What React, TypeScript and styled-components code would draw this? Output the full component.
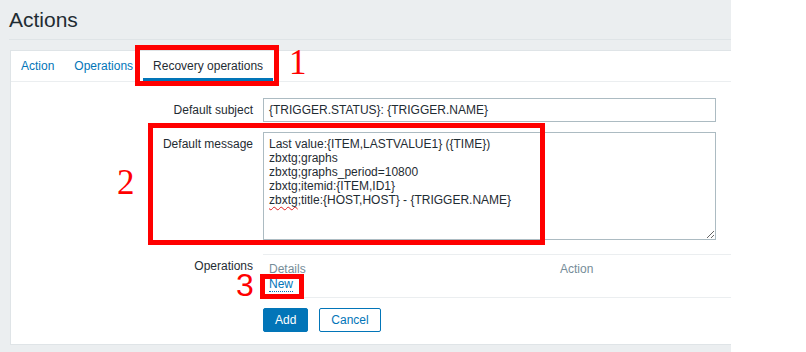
import styled, { createGlobalStyle } from "styled-components";

const GlobalStyle = createGlobalStyle`
    html, body {
        margin: 0;
        padding: 0;
        background: #ffffff;
    }
    body {
        font-family: "Liberation Sans", Arial, sans-serif;
        font-size: 12px;
        color: #1f2c33;
    }
`;

const Page = styled.div`
    position: relative;
    width: 731px;
    height: 352px;
    background: #ebeef0;
    overflow: hidden;
`;

const Header = styled.div`
    margin-left: 9px;
    height: 40px;
    border-bottom: 1px solid #dfe4e7;
    box-sizing: border-box;
`;

const Title = styled.h1`
    margin: 0;
    padding-top: 8px;
    font-size: 21px;
    font-weight: normal;
    line-height: 24px;
    color: #1f2c33;
`;

const Card = styled.div`
    margin: 10px 0 0 10px;
    background: #ffffff;
    border: 1px solid #dfe4e7;
    border-right: none;
    height: 295px;
    box-sizing: border-box;
`;

const TabBar = styled.div`
    display: flex;
    height: 30px;
    border-bottom: 1px solid #ebeef0;
`;

const Tab = styled.div<{ $active?: boolean }>`
    display: flex;
    align-items: center;
    height: 30px;
    box-sizing: border-box;
    padding: 3px 10px 0;
    color: ${(p) => (p.$active ? "#1f2c33" : "#0275b8")};
    border-bottom: 3px solid ${(p) => (p.$active ? "#0275b8" : "transparent")};
`;

const Form = styled.div`
    display: grid;
    grid-template-columns: 242px 1fr;
    column-gap: 10px;
    padding-top: 16px;
`;

const Label = styled.div`
    text-align: right;
    padding-top: 5px;
    line-height: 14px;
`;

const Field = styled.div<{ $mb: number }>`
    margin-bottom: ${(p) => p.$mb}px;
`;

const Input = styled.div`
    width: 453px;
    height: 24px;
    box-sizing: border-box;
    border: 1px solid #acbbc2;
    padding: 0 5px;
    line-height: 22px;
    white-space: nowrap;
`;

const TextArea = styled.div`
    width: 453px;
    height: 108px;
    box-sizing: border-box;
    border: 1px solid #acbbc2;
    padding: 4px 5px;
    line-height: 14px;
    white-space: pre;
    resize: vertical;
    overflow: auto;
`;

const Misspelled = styled.span`
    text-decoration: underline wavy #e02020;
    text-decoration-thickness: 1px;
    text-underline-offset: 2px;
`;

const OpsTable = styled.div`
    display: grid;
    grid-template-columns: 291px 1fr;
    border-top: 1px solid #ebeef0;
    border-bottom: 1px solid #ebeef0;
    padding-bottom: 6px;
`;

const HeadCell = styled.div`
    padding: 7px 6px 0;
    line-height: 14px;
    color: #768d99;
`;

const BodyCell = styled.div`
    padding: 1px 6px 0;
    line-height: 14px;
`;

const NewLink = styled.span`
    color: #0275b8;
    border-bottom: 1px dotted #0275b8;
`;

const Buttons = styled.div`
    display: flex;
    gap: 11px;
`;

const Button = styled.button<{ $primary?: boolean }>`
    height: 24px;
    padding: 0 11px;
    font-family: "Liberation Sans", Arial, sans-serif;
    font-size: 12px;
    border: 1px solid #0275b8;
    border-radius: 2px;
    background: ${(p) => (p.$primary ? "#0275b8" : "#ffffff")};
    color: ${(p) => (p.$primary ? "#ffffff" : "#0275b8")};
`;

// red annotation frames drawn over the screenshot
const Mark = styled.div<{ $x: number; $y: number; $w: number; $h: number }>`
    position: absolute;
    left: ${(p) => p.$x}px;
    top: ${(p) => p.$y}px;
    width: ${(p) => p.$w}px;
    height: ${(p) => p.$h}px;
    border: 5px solid #ff0000;
    box-sizing: border-box;
`;

const Num = styled.div<{ $x: number; $y: number; $serif?: boolean }>`
    position: absolute;
    left: ${(p) => p.$x}px;
    top: ${(p) => p.$y}px;
    font-family: ${(p) => (p.$serif ? '"Liberation Serif", serif' : '"Liberation Sans", sans-serif')};
    font-size: ${(p) => (p.$serif ? 35 : 32)}px;
    line-height: 1;
    color: #ff0000;
`;

const message = [
    "Last value:{ITEM,LASTVALUE1} ({TIME})",
    "zbxtg;graphs",
    "zbxtg;graphs_period=10800",
    "zbxtg;itemid:{ITEM,ID1}",
];

function App() {
    return (
        <>
            <GlobalStyle />
            <Page>
                <Header>
                    <Title>Actions</Title>
                </Header>
                <Card>
                    <TabBar>
                        <Tab>Action</Tab>
                        <Tab>Operations</Tab>
                        <Tab $active>Recovery operations</Tab>
                    </TabBar>
                    <Form>
                        <Label>Default subject</Label>
                        <Field $mb={10}>
                            <Input>{"{TRIGGER.STATUS}: {TRIGGER.NAME}"}</Input>
                        </Field>
                        <Label>Default message</Label>
                        <Field $mb={14}>
                            <TextArea>
                                {message.join("\n") + "\n"}
                                <Misspelled>zbxtg</Misspelled>
                                {";title:{HOST,HOST} - {TRIGGER.NAME}"}
                            </TextArea>
                        </Field>
                        <Label>Operations</Label>
                        <Field $mb={10}>
                            <OpsTable>
                                <HeadCell>Details</HeadCell>
                                <HeadCell>Action</HeadCell>
                                <BodyCell>
                                    <NewLink>New</NewLink>
                                </BodyCell>
                                <BodyCell />
                            </OpsTable>
                        </Field>
                        <div />
                        <Buttons>
                            <Button $primary>Add</Button>
                            <Button>Cancel</Button>
                        </Buttons>
                    </Form>
                </Card>
                <Mark $x={135} $y={45} $w={144} $h={41} />
                <Num $x={289} $y={45} $serif>1</Num>
                <Mark $x={148} $y={123} $w={397} $h={122} />
                <Num $x={117} $y={165} $serif>2</Num>
                <Mark $x={260} $y={274} $w={44} $h={25} />
                <Num $x={236} $y={269}>3</Num>
            </Page>
        </>
    );
}

export default App;
